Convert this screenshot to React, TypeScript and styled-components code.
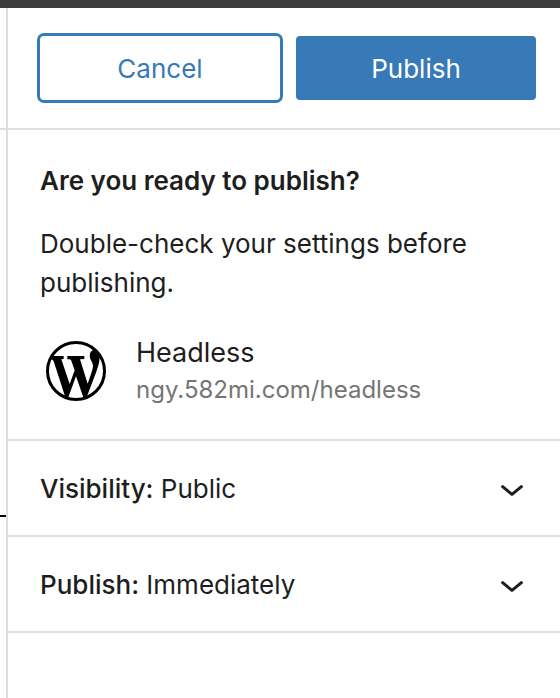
import React from "react";
import styled, { createGlobalStyle } from "styled-components";

const GlobalStyle = createGlobalStyle`
  * { box-sizing: border-box; }
  body {
    margin: 0;
    background: #fff;
    color: #1e1e1e;
    font-family: Inter, "Liberation Sans", sans-serif;
    font-size: 26px;
    line-height: 39px;
  }
`;

const Page = styled.div`
  display: flex;
  flex-direction: column;
  min-height: 100vh;
`;

const TopBar = styled.div`
  height: 8px;
  background: #3e3d3d;
`;

const Body = styled.div`
  display: flex;
  flex: 1;
`;

const EditorEdge = styled.div`
  display: flex;
  flex-direction: column;
  width: 6px;
`;

const EdgeHeader = styled.div`
  height: 122px;
  border-bottom: 2px solid #e0e0e0;
`;

const EdgeBlock = styled.div`
  height: 387px;
  border-bottom: 2px solid #000;
`;

const Panel = styled.section`
  flex: 1;
  min-width: 0;
  border-left: 2px solid #dddddd;
`;

const Actions = styled.header`
  display: flex;
  align-items: center;
  gap: 13px;
  height: 122px;
  padding: 0 24px 0 29px;
  border-bottom: 2px solid #e0e0e0;
`;

const Button = styled.button<{ $primary?: boolean }>`
  flex: 1 1 ${(p) => (p.$primary ? 0 : 6)}px;
  height: ${(p) => (p.$primary ? 64 : 70)}px;
  padding: 0;
  border: ${(p) => (p.$primary ? "0" : "3px solid #3879b7")};
  border-radius: ${(p) => (p.$primary ? 4 : 7)}px;
  background: ${(p) => (p.$primary ? "#3879b7" : "#fff")};
  color: ${(p) => (p.$primary ? "#fff" : "#3879b7")};
  font: inherit;
`;

const Intro = styled.div`
  padding: 31px 32px;
`;

const Title = styled.h2`
  margin: 0 0 24px;
  font-size: 26px;
  line-height: 39px;
  font-weight: 600;
`;

const Text = styled.p`
  margin: 0 0 32px;
`;

const Site = styled.div`
  display: flex;
  align-items: center;
  gap: 24px;
`;

const Logo = styled.svg`
  width: 72px;
  height: 72px;
  flex: none;
  fill: #000;
`;

const SiteName = styled.div`
  font-size: 27px;
  line-height: 38px;
`;

const SiteUrl = styled.div`
  font-size: 24px;
  line-height: 36px;
  color: #757575;
`;

const Row = styled.button`
  display: flex;
  align-items: center;
  justify-content: space-between;
  width: 100%;
  height: 96px;
  padding: 0 24px 0 32px;
  border: 0;
  border-top: 2px solid #e0e0e0;
  background: none;
  color: inherit;
  font: inherit;
  text-align: left;

  &:last-child {
    height: 98px;
    border-bottom: 2px solid #e0e0e0;
  }
`;

const Label = styled.span`
  font-weight: 500;
`;

const Arrow = styled.svg`
  width: 48px;
  height: 48px;
  fill: none;
  stroke: #1e1e1e;
  stroke-width: 1.5;
  stroke-linecap: round;
  stroke-linejoin: round;
`;

function SettingRow({ label, value }: { label: string; value: string }) {
  return (
    <Row type="button" aria-expanded="false">
      <span><Label>{label}</Label> {value}</span>
      <Arrow viewBox="0 0 24 24" aria-hidden="true">
        <path d="M7.3 11.3L12 15.2l4.7-3.9" />
      </Arrow>
    </Row>
  );
}

export default function App() {
  return (
    <>
      <GlobalStyle />
      <Page>
        <TopBar />
        <Body>
          <EditorEdge>
            <EdgeHeader />
            <EdgeBlock />
          </EditorEdge>
          <Panel aria-label="Editor publish">
            <Actions>
              <Button type="button">Cancel</Button>
              <Button type="button" $primary>Publish</Button>
            </Actions>
            <Intro>
              <Title>Are you ready to publish?</Title>
              <Text>Double-check your settings before publishing.</Text>
              <Site>
                <Logo viewBox="30 30 216 216" aria-hidden="true">
                  <circle cx="138" cy="138" r="85.5" fill="none" stroke="#000" strokeWidth="9" />
                  <path d="M62 93H101V102L94 103L119 177L134 136L123 105Q122 103 118 103H112V93H163V102L150 103L173 176L184 144C191 124 190 119 184 108C177 95 177 80 190 75C196 73 204 77 208 86C211 98 207 118 200 137L170 217H160L138 154L115 217H106L71 109Q69 103 62 103Z" />
                </Logo>
                <div>
                  <SiteName>Headless</SiteName>
                  <SiteUrl>ngy.582mi.com/headless</SiteUrl>
                </div>
              </Site>
            </Intro>
            <SettingRow label="Visibility:" value="Public" />
            <SettingRow label="Publish:" value="Immediately" />
          </Panel>
        </Body>
      </Page>
    </>
  );
}
